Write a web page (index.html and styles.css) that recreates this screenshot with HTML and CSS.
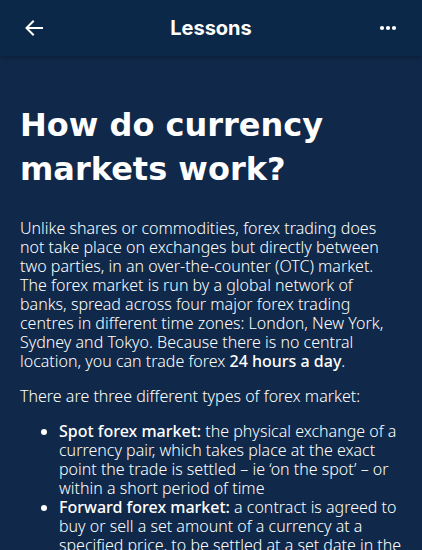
FILE: index.html
```html
<!DOCTYPE html>
<html>
<head>
<meta charset="utf-8">
<link rel="stylesheet" href="styles.css">
</head>
<body>
<header class="topbar">
  <button class="icon-btn" aria-label="Back">
    <svg width="18" height="16" viewBox="0 0 18 16"><path d="M17 8H2M8 1.5L1.5 8L8 14.5" fill="none" stroke="#fff" stroke-width="2" stroke-linecap="square"/></svg>
  </button>
  <h1 class="topbar-title">Lessons</h1>
  <button class="icon-btn" aria-label="More">
    <svg width="18" height="6" viewBox="0 0 18 6"><circle cx="3" cy="3" r="2.1" fill="#fff"/><circle cx="9" cy="3" r="2.1" fill="#fff"/><circle cx="15" cy="3" r="2.1" fill="#fff"/></svg>
  </button>
</header>
<main class="content">
  <h2 class="lesson-title">How do currency markets work?</h2>
  <p>Unlike shares or commodities, forex trading does not take place on exchanges but directly between two parties, in an over-the-counter (OTC) market. The forex market is run by a global network of banks, spread across four major forex trading centres in different time zones: London, New York, Sydney and Tokyo. Because there is no central location, you can trade forex <strong>24 hours a day</strong>.</p>
  <p>There are three different types of forex market:</p>
  <ul class="list">
    <li><strong>Spot forex market:</strong> the physical exchange of a currency pair, which takes place at the exact point the trade is settled – ie ‘on the spot’ – or within a short period of time</li>
    <li><strong>Forward forex market:</strong> a contract is agreed to buy or sell a set amount of a currency at a specified price, to be settled at a set date in the future or within a range of future dates</li>
  </ul>
</main>
</body>
</html>
```
FILE: styles.css
```css
html, body {
  margin: 0;
  padding: 0;
}
body {
  background: #10294a;
  color: #fff;
  font-family: "Noto Sans", "Liberation Sans", sans-serif;
  overflow: hidden;
  height: 550px;
}
.topbar {
  height: 56px;
  background: #0c2848;
  display: flex;
  align-items: center;
  justify-content: space-between;
  padding: 0 20px;
  box-shadow: 0 2px 4px rgba(0,0,0,0.25);
  position: relative;
}
.icon-btn {
  background: none;
  border: 0;
  padding: 0;
  width: 28px;
  height: 28px;
  display: flex;
  align-items: center;
  justify-content: center;
}
.topbar-title {
  margin: 0;
  font-family: Inter, sans-serif;
  font-size: 20px;
  font-weight: 700;
}
.content {
  padding: 47px 20px 0 20px;
}
.lesson-title {
  margin: 0 0 28px 0;
  font-family: "DejaVu Sans", sans-serif;
  font-size: 32px;
  line-height: 44px;
  font-weight: 700;
}
p {
  margin: 0 0 16px 0;
  font-size: 16px;
  line-height: 19px;
  font-weight: 300;
}
strong {
  font-weight: 500;
}
.list {
  margin: 0;
  padding-left: 39px;
  font-size: 16px;
  line-height: 19px;
  font-weight: 300;
}
```
